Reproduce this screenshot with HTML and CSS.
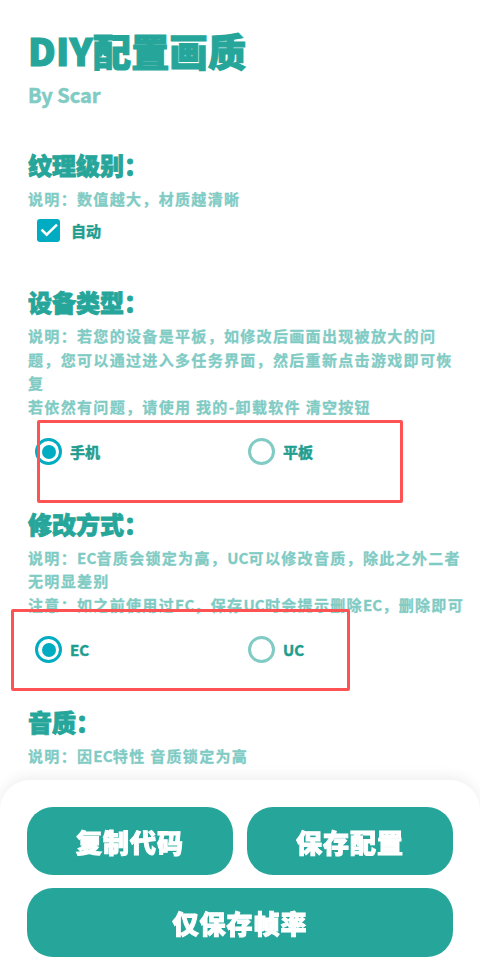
FILE: index.html
```html
<!DOCTYPE html>
<html lang="zh-CN">
<head>
<meta charset="utf-8">
<title>DIY配置画质</title>
<link rel="stylesheet" href="styles.css">
</head>
<body>
<main class="page">
  <h1 class="title">DIY配置画质</h1>
  <div class="author">By Scar</div>

  <section class="section section-first">
    <h2 class="heading">纹理级别：</h2>
    <p class="desc">说明：数值越大，材质越清晰</p>
    <label class="check-row">
      <span class="checkbox">
        <svg viewBox="0 0 24 24" width="20" height="20"><path d="M4 12.5l5.2 5.2L20.5 6.5" fill="none" stroke="#fff" stroke-width="3" stroke-linecap="square"/></svg>
      </span>
      <span class="opt-label">自动</span>
    </label>
  </section>

  <section class="section">
    <h2 class="heading">设备类型：</h2>
    <p class="desc">说明：若您的设备是平板，如修改后画面出现被放大的问题，您可以通过进入多任务界面，然后重新点击游戏即可恢复<br>若依然有问题，请使用 我的-卸载软件 清空按钮</p>
    <div class="radio-row">
      <div class="mark mark-a"></div>
      <label class="radio-opt"><span class="radio on"></span><span class="opt-label">手机</span></label>
      <label class="radio-opt"><span class="radio"></span><span class="opt-label">平板</span></label>
    </div>
  </section>

  <section class="section">
    <h2 class="heading">修改方式：</h2>
    <p class="desc">说明：<span class="lat">EC</span>音质会锁定为高，<span class="lat">UC</span>可以修改音质，除此之外二者无明显差别<br>注意：如之前使用过<span class="lat">EC</span>，保存<span class="lat">UC</span>时会提示删除<span class="lat">EC</span>，删除即可</p>
    <div class="radio-row">
      <div class="mark mark-b"></div>
      <label class="radio-opt"><span class="radio on"></span><span class="opt-label">EC</span></label>
      <label class="radio-opt"><span class="radio"></span><span class="opt-label">UC</span></label>
    </div>
  </section>

  <section class="section">
    <h2 class="heading">音质：</h2>
    <p class="desc">说明：因<span class="lat">EC</span>特性 音质锁定为高</p>
  </section>
</main>

<footer class="sheet">
  <div class="btn-row">
    <button class="btn">复制代码</button>
    <button class="btn">保存配置</button>
  </div>
  <button class="btn btn-wide">仅保存帧率</button>
</footer>
</body>
</html>
```

FILE: styles.css
```css
* { box-sizing: border-box; }

html, body {
  margin: 0;
  padding: 0;
  background: #ffffff;
}

body {
  font-family: "Noto Sans CJK SC", "Noto Sans", sans-serif;
  color: #26a69a;
}

.page {
  padding: 27px 12px 220px 28px;
}

.title {
  margin: 0;
  font-size: 38px;
  line-height: 46px;
  font-weight: 900;
  color: #26a69a;
  letter-spacing: 0.3px;
  -webkit-text-stroke: 1.2px #26a69a;
}

.author {
  margin-top: 8px;
  font-size: 20px;
  line-height: 28px;
  font-weight: 700;
  color: #80cbc4;
  -webkit-text-stroke: 0.5px #80cbc4;
}

.section {
  margin-top: 44px;
}

.section-first {
  margin-top: 40px;
}

.heading {
  margin: 0;
  font-size: 24px;
  line-height: 32px;
  font-weight: 900;
  color: #26a69a;
  -webkit-text-stroke: 0.9px #26a69a;
}

.desc {
  margin: 6px 0 0;
  font-size: 15px;
  line-height: 23.4px;
  letter-spacing: 1.33px;
  font-weight: 700;
  color: #80cbc4;
  -webkit-text-stroke: 0.3px #80cbc4;
}

.desc .lat {
  letter-spacing: 0.2px;
}

.check-row {
  display: flex;
  align-items: center;
  gap: 11px;
  margin: 8px 0 0 9px;
  height: 24px;
}

.checkbox {
  width: 23px;
  height: 23px;
  border-radius: 3px;
  background: #00acc1;
  display: flex;
  align-items: center;
  justify-content: center;
}

.opt-label {
  font-size: 15px;
  font-weight: 700;
  color: #1f9d8f;
  -webkit-text-stroke: 0.5px #1f9d8f;
}

.radio-row {
  position: relative;
  display: grid;
  grid-template-columns: 213px 1fr;
  align-items: center;
  margin: 20px 0 0 7px;
  height: 26px;
}

.radio-opt {
  display: flex;
  align-items: center;
  gap: 8px;
}

.radio {
  width: 27px;
  height: 27px;
  border-radius: 50%;
  border: 3px solid #80cbc4;
  display: flex;
  align-items: center;
  justify-content: center;
}

.radio.on {
  border-color: #00acc1;
}

.radio.on::after {
  content: "";
  width: 14px;
  height: 14px;
  border-radius: 50%;
  background: #00acc1;
}

.mark {
  position: absolute;
  border: 3px solid #ff5252;
  border-radius: 2px;
  pointer-events: none;
  z-index: 2;
}

.mark-a {
  left: 2px;
  top: -18px;
  width: 366px;
  height: 83px;
}

.mark-b {
  left: -24px;
  top: -27px;
  width: 339px;
  height: 82px;
}

.sheet {
  position: fixed;
  left: 0;
  right: 0;
  bottom: 0;
  height: 192px;
  background: #ffffff;
  border-radius: 30px 30px 0 0;
  box-shadow: 0 -3px 14px rgba(0, 0, 0, 0.07);
  padding: 27px 27px 15px;
  display: flex;
  flex-direction: column;
  gap: 13px;
  z-index: 3;
}

.btn-row {
  display: grid;
  grid-template-columns: 1fr 1fr;
  gap: 14px;
}

.btn {
  height: 68px;
  border: none;
  border-radius: 26px;
  background: #26a69a;
  color: #ffffff;
  font-family: "Noto Sans CJK SC", "Noto Sans", sans-serif;
  font-size: 26px;
  font-weight: 900;
  letter-spacing: 1px;
  padding: 0;
  -webkit-text-stroke: 1px #ffffff;
}

.btn-wide {
  width: 100%;
  height: 69px;
}
```
